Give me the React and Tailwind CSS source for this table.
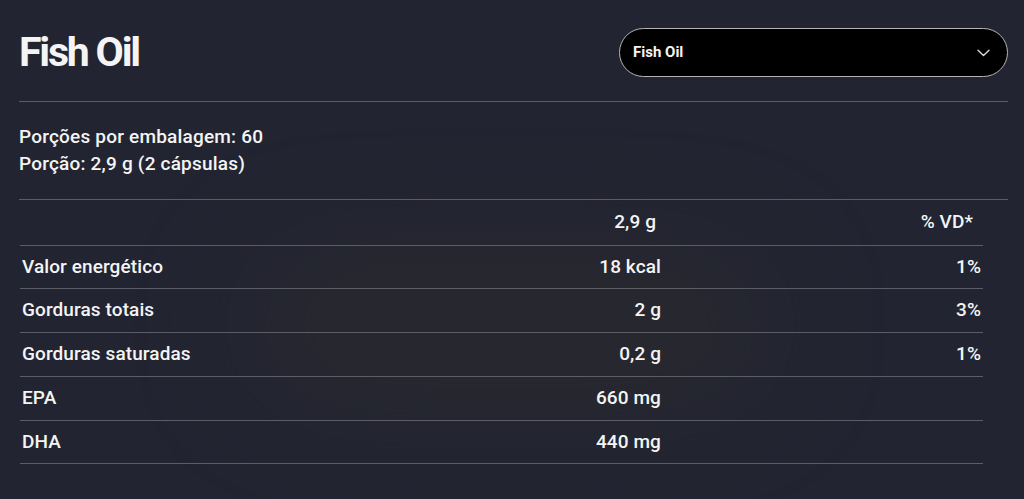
import React from 'react';

const rows = [
  { name: 'Valor energético', qty: '18 kcal', vd: '1%' },
  { name: 'Gorduras totais', qty: '2 g', vd: '3%' },
  { name: 'Gorduras saturadas', qty: '0,2 g', vd: '1%' },
  { name: 'EPA', qty: '660 mg', vd: '' },
  { name: 'DHA', qty: '440 mg', vd: '' },
];

export default function App() {
  return (
    <div
      className="relative h-[499px] w-full overflow-hidden bg-[#222431] text-[#f4f4f4]"
      style={{ fontFamily: 'Roboto, "Liberation Sans", sans-serif' }}
    >
      {/* faint blurred product glow behind the table */}
      <div className="pointer-events-none absolute left-[260px] top-[270px] h-[110px] w-[500px] rounded-full bg-[#34312c] opacity-50 blur-3xl" />

      <div className="relative pl-[19px] pr-[16px] pt-[28px]">
        {/* HEADER */}
        <div className="flex items-center justify-between">
          <h1 className="text-[41px] font-bold leading-none tracking-[-2.2px]">Fish Oil</h1>
          <button className="flex h-[49px] w-[389px] items-center justify-between rounded-full border border-[#b5b5b5] bg-black pl-[13px] pr-[17px]">
            <span className="text-[15px] font-bold tracking-[0px]">Fish Oil</span>
            <svg width="13" height="8" viewBox="0 0 13 8" fill="none" stroke="#d8d8d8" strokeWidth="1.4" strokeLinecap="round" strokeLinejoin="round">
              <path d="M1 1.2l5.5 5.3 5.5-5.3" />
            </svg>
          </button>
        </div>

        <div className="mt-[24px] h-px bg-[#5c5d66]" />

        {/* PORÇÕES */}
        <div className="pt-[21px] pb-[22px] text-[19px] font-medium leading-[27px] tracking-[0.2px]">
          <p>Porções por embalagem: 60</p>
          <p>Porção: 2,9 g (2 cápsulas)</p>
        </div>

        {/* TABELA */}
        <div className="h-px bg-[#5c5d66]" />
        <table className="ml-px w-[963px] border-collapse text-[19px] font-medium tracking-[0.1px]">
          <thead>
            <tr className="h-[45px] border-b border-[#5c5d66]">
              <th />
              <th className="pr-[5px] text-right font-medium">2,9 g</th>
              <th className="pr-[10px] text-right font-medium">% VD*</th>
            </tr>
          </thead>
          <tbody>
            {rows.map((r) => (
              <tr key={r.name} className="h-[43.75px] border-b border-[#5c5d66]">
                <td className="pl-[2px] text-left">{r.name}</td>
                <td className="w-[200px] text-right">{r.qty}</td>
                <td className="w-[322px] pr-[2px] text-right">{r.vd}</td>
              </tr>
            ))}
          </tbody>
        </table>
      </div>
    </div>
  );
}
